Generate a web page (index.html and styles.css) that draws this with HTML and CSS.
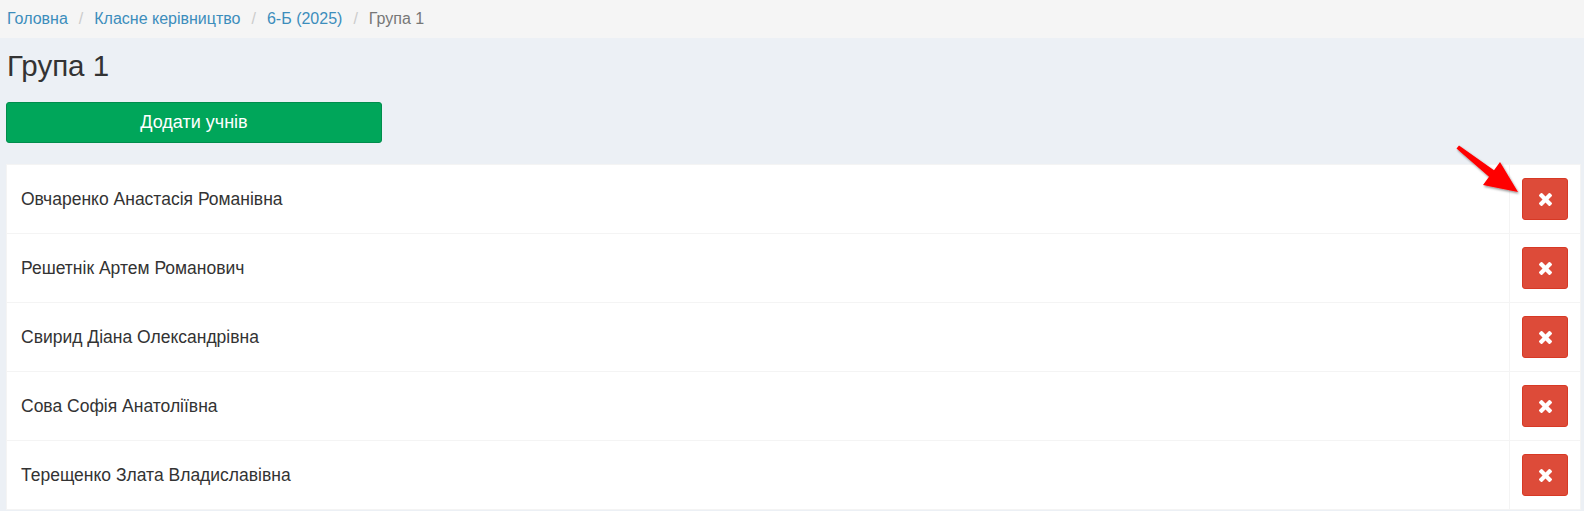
FILE: index.html
```html
<!DOCTYPE html>
<html lang="uk">
<head>
<meta charset="utf-8">
<title>Група 1</title>
<link rel="stylesheet" href="styles.css">
</head>
<body>
<nav class="breadcrumb">
  <a href="#">Головна</a><span class="sep">/</span>
  <a href="#">Класне керівництво</a><span class="sep">/</span>
  <a href="#">6-Б (2025)</a><span class="sep">/</span>
  <span class="active">Група 1</span>
</nav>
<main class="content">
  <h1 class="title">Група 1</h1>
  <button class="btn-add">Додати учнів</button>
  <table class="students">
    <tbody>
      <tr><td class="name">Овчаренко Анастасія Романівна</td><td class="act"><button class="btn-del"><svg viewBox="110 366 1188 1188" class="x"><path d="M1298 1322q0 40-28 68l-136 136q-28 28-68 28t-68-28l-294-294-294 294q-28 28-68 28t-68-28l-136-136q-28-28-28-68t28-68l294-294-294-294q-28-28-28-68t28-68l136-136q28-28 68-28t68 28l294 294 294-294q28-28 68-28t68 28l136 136q28 28 28 68t-28 68l-294 294 294 294q28 28 28 68z"/></svg></button></td></tr>
      <tr><td class="name">Решетнік Артем Романович</td><td class="act"><button class="btn-del"><svg viewBox="110 366 1188 1188" class="x"><path d="M1298 1322q0 40-28 68l-136 136q-28 28-68 28t-68-28l-294-294-294 294q-28 28-68 28t-68-28l-136-136q-28-28-28-68t28-68l294-294-294-294q-28-28-28-68t28-68l136-136q28-28 68-28t68 28l294 294 294-294q28-28 68-28t68 28l136 136q28 28 28 68t-28 68l-294 294 294 294q28 28 28 68z"/></svg></button></td></tr>
      <tr><td class="name">Свирид Діана Олександрівна</td><td class="act"><button class="btn-del"><svg viewBox="110 366 1188 1188" class="x"><path d="M1298 1322q0 40-28 68l-136 136q-28 28-68 28t-68-28l-294-294-294 294q-28 28-68 28t-68-28l-136-136q-28-28-28-68t28-68l294-294-294-294q-28-28-28-68t28-68l136-136q28-28 68-28t68 28l294 294 294-294q28-28 68-28t68 28l136 136q28 28 28 68t-28 68l-294 294 294 294q28 28 28 68z"/></svg></button></td></tr>
      <tr><td class="name">Сова Софія Анатоліївна</td><td class="act"><button class="btn-del"><svg viewBox="110 366 1188 1188" class="x"><path d="M1298 1322q0 40-28 68l-136 136q-28 28-68 28t-68-28l-294-294-294 294q-28 28-68 28t-68-28l-136-136q-28-28-28-68t28-68l294-294-294-294q-28-28-28-68t28-68l136-136q28-28 68-28t68 28l294 294 294-294q28-28 68-28t68 28l136 136q28 28 28 68t-28 68l-294 294 294 294q28 28 28 68z"/></svg></button></td></tr>
      <tr><td class="name">Терещенко Злата Владиславівна</td><td class="act"><button class="btn-del"><svg viewBox="110 366 1188 1188" class="x"><path d="M1298 1322q0 40-28 68l-136 136q-28 28-68 28t-68-28l-294-294-294 294q-28 28-68 28t-68-28l-136-136q-28-28-28-68t28-68l294-294-294-294q-28-28-28-68t28-68l136-136q28-28 68-28t68 28l294 294 294-294q28-28 68-28t68 28l136 136q28 28 28 68t-28 68l-294 294 294 294q28 28 28 68z"/></svg></button></td></tr>
    </tbody>
  </table>
</main>
<svg class="arrow" width="1584" height="511" viewBox="0 0 1584 511">
  <defs>
    <filter id="sh" x="-20%" y="-20%" width="140%" height="140%">
      <feDropShadow dx="1" dy="1.5" stdDeviation="1.2" flood-color="#000" flood-opacity="0.45"/>
    </filter>
  </defs>
  <polygon filter="url(#sh)" fill="#ff0000" points="1459,145.5 1494,170.3 1500,162 1518,192 1483,185 1489,176.7 1456.5,148.5"/>
</svg>
</body>
</html>
```
FILE: styles.css
```css
* { box-sizing: border-box; }
html, body { margin: 0; padding: 0; }
body {
  background: #ecf0f5;
  font-family: "Liberation Sans", Arial, sans-serif;
  color: #333;
  width: 1584px;
  height: 511px;
  overflow: hidden;
  position: relative;
}
.breadcrumb {
  height: 38px;
  background: #f5f5f5;
  display: flex;
  align-items: center;
  padding: 0 7px;
  font-size: 16px;
}
.breadcrumb a { color: #3c8dbc; text-decoration: none; }
.breadcrumb .sep { color: #ccc; padding: 0 11px; }
.breadcrumb .active { color: #777; }
.content { padding: 0 3px 0 6px; }
.title {
  margin: 11px 0 0 1px;
  font-size: 29.5px;
  line-height: 33px;
  font-weight: 400;
  color: #333;
}
.btn-add {
  display: block;
  margin-top: 20px;
  width: 376px;
  height: 41px;
  background: #00a65a;
  border: 1px solid #008d4c;
  border-radius: 3px;
  color: #fff;
  font-family: "Liberation Sans", Arial, sans-serif;
  font-size: 18px;
  padding: 0;
}
.students {
  margin-top: 21px;
  width: 100%;
  border-collapse: collapse;
  background: #fff;
  border: 1px solid #f4f4f4;
}
.students td {
  border: 1px solid #f4f4f4;
  height: 69px;
  padding: 0;
  vertical-align: middle;
}
.students td.name {
  padding-left: 14px;
  font-size: 17.5px;
  color: #333;
}
.students td.act {
  width: 71px;
  padding: 0 12px;
}
.btn-del {
  display: flex;
  align-items: center;
  justify-content: center;
  width: 46px;
  height: 42px;
  background: #dd4b39;
  border: 1px solid #d73925;
  border-radius: 3px;
  padding: 0;
}
.btn-del .x { width: 13px; height: 13px; fill: #fff; }
.arrow { position: absolute; left: 0; top: 0; pointer-events: none; }
```
